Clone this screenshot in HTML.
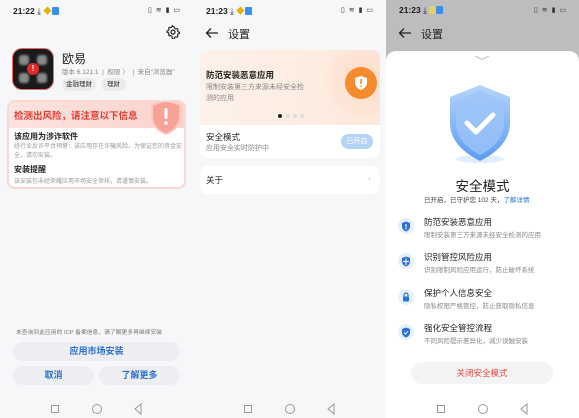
<!DOCTYPE html>
<html><head><meta charset="utf-8"><style>
*{margin:0;padding:0;box-sizing:border-box}
body{width:579px;height:418px;overflow:hidden;font-family:"Liberation Sans","Noto Sans CJK SC",sans-serif;background:#fff;position:relative}
.p{position:absolute;top:0;height:418px;width:193px;overflow:hidden}
.a{position:absolute;white-space:nowrap}
.sb{position:absolute;top:5px;left:13px;font-size:8.5px;color:#222;font-weight:bold}
.sr{position:absolute;top:6px;right:12px;font-size:7px;color:#333;letter-spacing:1px}
.nav{position:absolute;top:403px;left:0;width:193px;height:12px}
.nav .sq{position:absolute;left:51px;top:2px;width:8px;height:8px;border:1px solid #999}
.nav .ci{position:absolute;left:92px;top:1px;width:10px;height:10px;border:1px solid #999;border-radius:50%}
.nav .tr{position:absolute;left:133px;top:0}
.btn{position:absolute;background:#eceef1;border-radius:10px;color:#2a6fd6;font-size:9px;font-weight:bold;text-align:center}
</style></head><body>

<!-- Panel 1 -->
<div class="p" style="left:0;background:#f6f7f9">
<div class="sb">21:22 <span style="font-weight:normal">⤓</span> <span style="color:#e8b400">◆</span><span style="display:inline-block;width:7px;height:8px;background:#3a8ef0;border-radius:1px;vertical-align:-1px"></span></div>
<div class="sr">▯ ≋ ▮ ▭</div>
<svg class="a" style="left:166px;top:25px" width="14" height="14" viewBox="0 0 14 14"><circle cx="7" cy="7" r="2" fill="none" stroke="#222" stroke-width="1.2"/><path d="M7 1.5l1.2.4.3 1.3 1.2.7 1.3-.4.9.9-.4 1.3.7 1.2 1.3.3v1.4l-1.3.3-.7 1.2.4 1.3-.9.9-1.3-.4-1.2.7-.3 1.3H6.3L6 11.3l-1.2-.7-1.3.4-.9-.9.4-1.3-.7-1.2L1 7.3V5.9l1.3-.3.7-1.2-.4-1.3.9-.9 1.3.4 1.2-.7.3-1.3z" fill="none" stroke="#222" stroke-width="1.1"/></svg>
<div class="a" style="left:13px;top:49px;width:40px;height:40px;border-radius:9px;background:#1a1a1a;box-shadow:0 0 0 1px #e66"></div>
<div class="a" style="left:19px;top:55px;width:28px;height:28px;">
<div class="a" style="left:0;top:0;width:10px;height:10px;border-radius:3px;background:#888;filter:blur(1px)"></div>
<div class="a" style="left:18px;top:0;width:10px;height:10px;border-radius:3px;background:#888;filter:blur(1px)"></div>
<div class="a" style="left:0;top:18px;width:10px;height:10px;border-radius:3px;background:#888;filter:blur(1px)"></div>
<div class="a" style="left:18px;top:18px;width:10px;height:10px;border-radius:3px;background:#888;filter:blur(1px)"></div>
<div class="a" style="left:8px;top:8px;width:12px;height:12px;border-radius:50%;background:#e02a2a;color:#fff;font-size:8px;font-weight:bold;text-align:center;line-height:12px">!</div>
</div>
<div class="a" style="left:62px;top:50px;font-size:12px;color:#222">欧易</div>
<div class="a" style="left:62px;top:66px;font-size:6.5px;color:#888">版本 6.121.1 &nbsp;|&nbsp; 权限 〉 &nbsp;|&nbsp; 来自"浏览器"</div>
<div class="a" style="left:62px;top:78px;width:34px;height:13px;border-radius:7px;background:#ebebeb;font-size:6.5px;color:#333;text-align:center;line-height:13px">金融理财</div>
<div class="a" style="left:101px;top:78px;width:25px;height:13px;border-radius:7px;background:#ebebeb;font-size:6.5px;color:#333;text-align:center;line-height:13px">理财</div>
<div class="a" style="left:7px;top:100px;width:179px;height:89px;border-radius:8px;background:#fff;border:2px solid #fbd6d2;overflow:hidden">
<div class="a" style="left:0;top:0;width:179px;height:26px;background:linear-gradient(90deg,#fde3df,#fbd2cc)"></div>
<div class="a" style="left:5px;top:6px;font-size:9.5px;color:#e33b2f;font-weight:bold">检测出风险，请注意以下信息</div>
<svg class="a" style="left:140px;top:-4px" width="34" height="38" viewBox="0 0 34 38"><path d="M17 2 L31 7 V18 C31 27 25 33 17 36 C9 33 3 27 3 18 V7Z" fill="#f7a295" stroke="#fbc9c0" stroke-width="2"/><rect x="15.5" y="10" width="3" height="11" rx="1.5" fill="#fff"/><circle cx="17" cy="25" r="1.8" fill="#fff"/></svg>
<div class="a" style="left:5px;top:29px;font-size:8px;color:#222;font-weight:bold">该应用为涉诈软件</div>
<div class="a" style="left:5px;top:41px;font-size:6px;color:#999;line-height:9px;white-space:normal;width:168px">经行业反诈平台预警：该应用存在诈骗风险，为保证您的资金安全，请勿安装。</div>
<div class="a" style="left:5px;top:62px;font-size:8px;color:#222;font-weight:bold">安装提醒</div>
<div class="a" style="left:5px;top:74px;font-size:6px;color:#999">该安装包未经荣耀应用市场安全审核，请谨慎安装。</div>
</div>
<div class="a" style="left:16px;top:327px;font-size:5.8px;color:#777">未查询到此应用的 ICP 备案信息，请了解更多再继续安装</div>
<div class="btn" style="left:13px;top:342px;width:167px;height:19px;line-height:19px">应用市场安装</div>
<div class="btn" style="left:13px;top:366px;width:81px;height:19px;line-height:19px">取消</div>
<div class="btn" style="left:99px;top:366px;width:81px;height:19px;line-height:19px">了解更多</div>
<div class="nav"><div class="sq"></div><div class="ci"></div><svg class="tr" width="10" height="12"><path d="M8 1 L2 6 L8 11Z" fill="none" stroke="#999"/></svg></div>
</div>

<!-- Panel 2 -->
<div class="p" style="left:193px;background:#f6f7f9">
<div class="sb">21:23 <span style="font-weight:normal">⤓</span> <span style="color:#e8b400">◆</span><span style="display:inline-block;width:7px;height:8px;background:#3a8ef0;border-radius:1px;vertical-align:-1px"></span></div>
<div class="sr">▯ ≋ ▮ ▭</div>
<svg class="a" style="left:12px;top:27px" width="14" height="12"><path d="M13 6H2M6 1.5L1.5 6 6 10.5" fill="none" stroke="#222" stroke-width="1.3"/></svg>
<div class="a" style="left:35px;top:26px;font-size:11px;color:#222">设置</div>
<div class="a" style="left:7px;top:50px;width:180px;height:108px;border-radius:8px;background:#fff;overflow:hidden">
<div class="a" style="left:0;top:0;width:180px;height:75px;background:linear-gradient(90deg,#fdf1ea,#fde9dc)"></div>
<div class="a" style="left:125px;top:-10px;width:80px;height:80px;border-radius:50%;background:radial-gradient(circle,#fcdcc7 0%,#fde6d8 60%,rgba(253,233,220,0) 72%)"></div>
<div class="a" style="left:145px;top:17px;width:32px;height:32px;border-radius:50%;background:#f78a2a"></div>
<svg class="a" style="left:154px;top:25px" width="14" height="16" viewBox="0 0 14 16"><path d="M7 1L13 3V8C13 11 10 14 7 15 4 14 1 11 1 8V3Z" fill="#fff"/><rect x="6.2" y="4" width="1.6" height="5" fill="#f78a2a"/><circle cx="7" cy="11" r=".9" fill="#f78a2a"/></svg>
<div class="a" style="left:6px;top:19px;font-size:8.5px;color:#222;font-weight:bold">防范安装恶意应用</div>
<div class="a" style="left:6px;top:32px;font-size:7px;color:#888;line-height:11px;white-space:normal;width:100px">限制安装第三方来源未经安全检测的应用</div>
<div class="a" style="left:78px;top:64px;width:4px;height:4px;border-radius:50%;background:#222"></div>
<div class="a" style="left:86px;top:64px;width:4px;height:4px;border-radius:50%;background:#ddd"></div>
<div class="a" style="left:93px;top:64px;width:4px;height:4px;border-radius:50%;background:#ddd"></div>
<div class="a" style="left:100px;top:64px;width:4px;height:4px;border-radius:50%;background:#ddd"></div>
<div class="a" style="left:6px;top:81px;font-size:8.5px;color:#222">安全模式</div>
<div class="a" style="left:6px;top:93px;font-size:7px;color:#888">应用安全实时防护中</div>
<div class="a" style="left:141px;top:84px;width:32px;height:15px;border-radius:8px;background:#b3d3f7;color:#fff;font-size:7px;text-align:center;line-height:15px">已开启</div>
</div>
<div class="a" style="left:7px;top:166px;width:180px;height:28px;border-radius:8px;background:#fff">
<div class="a" style="left:6px;top:8px;font-size:8.5px;color:#222">关于</div>
<div class="a" style="left:168px;top:7px;font-size:9px;color:#ccc">›</div>
</div>
<div class="nav"><div class="sq"></div><div class="ci"></div><svg class="tr" width="10" height="12"><path d="M8 1 L2 6 L8 11Z" fill="none" stroke="#999"/></svg></div>
</div>

<!-- Panel 3 -->
<div class="p" style="left:386px;background:#bcbdbf">
<div class="sb" style="color:#1d1d1d">21:23 <span style="font-weight:normal">⤓</span> <span style="display:inline-block;width:7px;height:8px;background:#e8d060;border-radius:1px;vertical-align:-1px"></span><span style="display:inline-block;width:7px;height:8px;background:#3a8ef0;border-radius:1px;vertical-align:-1px"></span></div>
<div class="sr">▯ ≋ ▮ ▭</div>
<svg class="a" style="left:12px;top:27px" width="14" height="12"><path d="M13 6H2M6 1.5L1.5 6 6 10.5" fill="none" stroke="#222" stroke-width="1.3"/></svg>
<div class="a" style="left:35px;top:26px;font-size:11px;color:#222">设置</div>
<div class="a" style="left:0;top:51px;width:193px;height:380px;border-radius:10px 10px 0 0;background:#fff"></div>
<svg class="a" style="left:88px;top:55px" width="16" height="6"><path d="M1 1 L8 4.5 L15 1" fill="none" stroke="#ccc" stroke-width="1.3"/></svg>
<svg class="a" style="left:58px;top:83px" width="72" height="82" viewBox="0 0 72 82"><defs><linearGradient id="g" x1="0" y1="0" x2="0" y2="1"><stop offset="0" stop-color="#b5d5fc"/><stop offset="1" stop-color="#5c9cf2"/></linearGradient></defs><ellipse cx="36" cy="76" rx="24" ry="4" fill="#e2eefd"/><path d="M36 2 L66 14 V40 C66 58 52 70 36 78 C20 70 6 58 6 40 V14Z" fill="url(#g)"/><path d="M36 8 L60 18 V40 C60 55 49 65 36 72 C23 65 12 55 12 40 V18Z" fill="#9cc4f9" opacity=".8"/><path d="M23 40 L32 49 L49 32" fill="none" stroke="#fff" stroke-width="5" stroke-linecap="round" stroke-linejoin="round"/></svg>
<div class="a" style="left:0;width:193px;text-align:center;top:175px;font-size:13.5px;color:#222">安全模式</div>
<div class="a" style="left:38px;top:194px;font-size:6.5px;color:#444">已开启，已守护您 102 天，<span style="color:#2a72d8">了解详情</span></div>
<div class="a" style="left:12px;top:218px;width:16px;height:16px;border-radius:50%;background:#e7f0fd"></div>
<svg class="a" style="left:15px;top:221px" width="10" height="11" viewBox="0 0 10 11"><path d="M5 .5L9 2V5.5C9 8 7 9.7 5 10.5 3 9.7 1 8 1 5.5V2Z" fill="#2a72d8"/><rect x="4.4" y="3" width="1.2" height="3.5" fill="#fff"/><circle cx="5" cy="7.8" r=".7" fill="#fff"/></svg>
<div class="a" style="left:38px;top:216px;font-size:8.5px;color:#222">防范安装恶意应用</div>
<div class="a" style="left:38px;top:229px;font-size:6.5px;color:#888">限制安装第三方来源未经安全检测的应用</div>
<div class="a" style="left:12px;top:253px;width:16px;height:16px;border-radius:50%;background:#e7f0fd"></div>
<svg class="a" style="left:15px;top:256px" width="10" height="11" viewBox="0 0 10 11"><path d="M5 .5L9 2V5.5C9 8 7 9.7 5 10.5 3 9.7 1 8 1 5.5V2Z" fill="#2a72d8"/><path d="M5 2.5V9M2 5.5H8" stroke="#fff" stroke-width="1"/></svg>
<div class="a" style="left:38px;top:251px;font-size:8.5px;color:#222">识别管控风险应用</div>
<div class="a" style="left:38px;top:264px;font-size:6.5px;color:#888">识别限制风险应用运行，防止破坏系统</div>
<div class="a" style="left:12px;top:289px;width:16px;height:16px;border-radius:50%;background:#e7f0fd"></div>
<svg class="a" style="left:16px;top:292px" width="8" height="10" viewBox="0 0 8 10"><path d="M2 4.5V3a2 2 0 0 1 4 0v1.5" fill="none" stroke="#2a72d8" stroke-width="1.2"/><rect x="1" y="4.5" width="6" height="5" rx="1" fill="#2a72d8"/></svg>
<div class="a" style="left:38px;top:287px;font-size:8.5px;color:#222">保护个人信息安全</div>
<div class="a" style="left:38px;top:300px;font-size:6.5px;color:#888">隐私权限严格管控，防止获取隐私信息</div>
<div class="a" style="left:12px;top:324px;width:16px;height:16px;border-radius:50%;background:#e7f0fd"></div>
<svg class="a" style="left:15px;top:327px" width="10" height="11" viewBox="0 0 10 11"><path d="M5 .5L9 2V5.5C9 8 7 9.7 5 10.5 3 9.7 1 8 1 5.5V2Z" fill="#2a72d8"/><path d="M3 5.5L4.5 7 7 4.2" fill="none" stroke="#fff" stroke-width="1"/></svg>
<div class="a" style="left:38px;top:322px;font-size:8.5px;color:#222">强化安全管控流程</div>
<div class="a" style="left:38px;top:335px;font-size:6.5px;color:#888">不同风险提示差异化，减少误触安装</div>
<div class="a" style="left:25px;top:362px;width:142px;height:22px;border-radius:11px;background:#f4f4f5;color:#e8473b;font-size:8.5px;text-align:center;line-height:22px">关闭安全模式</div>
<div class="nav"><div class="sq"></div><div class="ci"></div><svg class="tr" width="10" height="12"><path d="M8 1 L2 6 L8 11Z" fill="none" stroke="#999"/></svg></div>
</div>
</body></html>
